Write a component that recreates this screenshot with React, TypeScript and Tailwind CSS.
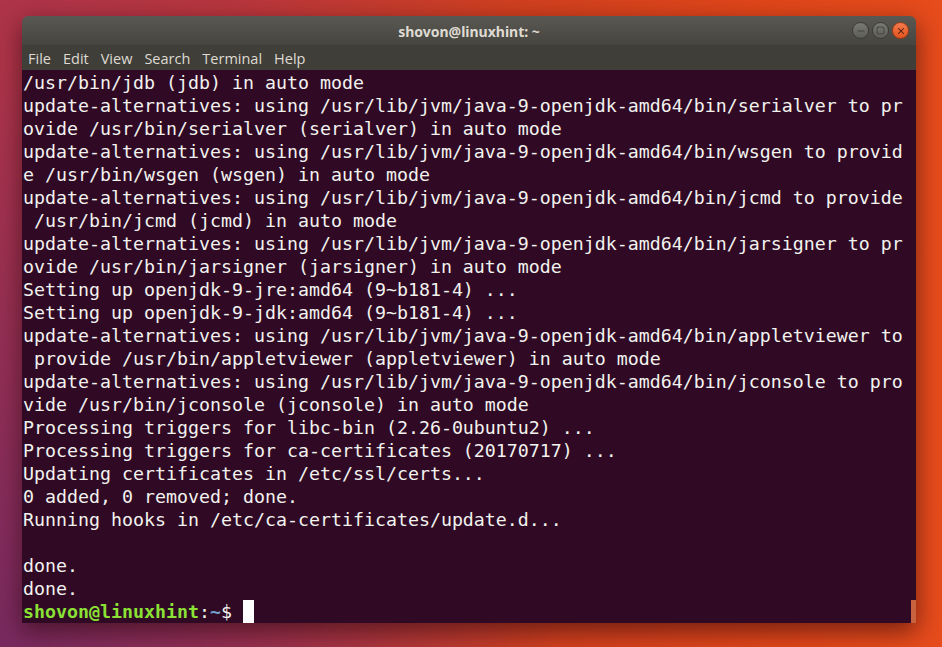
import { X, Minus, Square } from 'lucide-react'

const lines: string[] = [
  '/usr/bin/jdb (jdb) in auto mode',
  'update-alternatives: using /usr/lib/jvm/java-9-openjdk-amd64/bin/serialver to pr',
  'ovide /usr/bin/serialver (serialver) in auto mode',
  'update-alternatives: using /usr/lib/jvm/java-9-openjdk-amd64/bin/wsgen to provid',
  'e /usr/bin/wsgen (wsgen) in auto mode',
  'update-alternatives: using /usr/lib/jvm/java-9-openjdk-amd64/bin/jcmd to provide',
  ' /usr/bin/jcmd (jcmd) in auto mode',
  'update-alternatives: using /usr/lib/jvm/java-9-openjdk-amd64/bin/jarsigner to pr',
  'ovide /usr/bin/jarsigner (jarsigner) in auto mode',
  'Setting up openjdk-9-jre:amd64 (9~b181-4) ...',
  'Setting up openjdk-9-jdk:amd64 (9~b181-4) ...',
  'update-alternatives: using /usr/lib/jvm/java-9-openjdk-amd64/bin/appletviewer to',
  ' provide /usr/bin/appletviewer (appletviewer) in auto mode',
  'update-alternatives: using /usr/lib/jvm/java-9-openjdk-amd64/bin/jconsole to pro',
  'vide /usr/bin/jconsole (jconsole) in auto mode',
  'Processing triggers for libc-bin (2.26-0ubuntu2) ...',
  'Processing triggers for ca-certificates (20170717) ...',
  'Updating certificates in /etc/ssl/certs...',
  '0 added, 0 removed; done.',
  'Running hooks in /etc/ca-certificates/update.d...',
  '',
  'done.',
  'done.',
]

const menus = ['File', 'Edit', 'View', 'Search', 'Terminal', 'Help']

function WindowButtons() {
  return (
    <div className="flex items-center gap-[3px] mr-[7px]">
      <div className="w-[17px] h-[17px] rounded-full bg-[linear-gradient(#7a7a75,#5c5c58)] border border-[#3a3a36] flex items-center justify-center">
        <Minus size={10} strokeWidth={2} className="text-[#3c3b37]" />
      </div>
      <div className="w-[17px] h-[17px] rounded-full bg-[linear-gradient(#7a7a75,#5c5c58)] border border-[#3a3a36] flex items-center justify-center">
        <Square size={9} strokeWidth={2} className="text-[#3c3b37]" />
      </div>
      <div className="w-[17px] h-[17px] rounded-full bg-[linear-gradient(#f37a4c,#e2541f)] border border-[#9c3a15] flex items-center justify-center">
        <X size={10} strokeWidth={2.5} className="text-[#4a1c0c]" />
      </div>
    </div>
  )
}

export default function App() {
  return (
    <div className="w-[942px] h-[647px] overflow-hidden relative bg-[linear-gradient(90deg,#ad344a_0%,#b8363e_25%,#d0401f_55%,#e0461a_80%,#e64c1c_100%)]">
      {/* purple tint on the lower left */}
      <div className="absolute inset-0 bg-[radial-gradient(ellipse_60%_90%_at_0%_100%,rgba(110,40,100,0.85),rgba(110,40,100,0)_100%)]" />

      <div className="relative pt-[16px] pl-[22px]">
        <div className="w-[894px] flex flex-col rounded-t-[6px] shadow-[0_8px_24px_rgba(40,5,10,0.6)]">
          {/* Title bar */}
          <div className="h-[29px] rounded-t-[6px] bg-[linear-gradient(#595852,#46453f)] flex items-center justify-end relative">
            <div className="absolute inset-0 flex items-center justify-center font-['Noto_Sans',sans-serif] text-[14px] font-bold text-[#dfdbd2] pt-[1px]">
              shovon@linuxhint: ~
            </div>
            <div className="relative"><WindowButtons /></div>
          </div>

          {/* Menu bar */}
          <div className="h-[25px] bg-[#3f3e39] flex items-center gap-[12px] pl-[6px] pt-[3px] font-['Open_Sans',sans-serif] text-[14.5px] text-[#dfdbd2]">
            {menus.map((m) => (
              <span key={m}>{m}</span>
            ))}
          </div>

          {/* Terminal */}
          <div className="h-[553px] bg-[#300a24] relative pl-[1px] pt-[1px] font-['DejaVu_Sans_Mono',monospace] text-[18.27px] leading-[23px] text-[#f2f2ef] whitespace-pre">
            {lines.map((l, i) => (
              <div key={i} className="h-[23px]">{l}</div>
            ))}
            <div className="h-[23px] flex">
              <span className="font-bold text-[#8ae234]">shovon@linuxhint</span>
              <span>:</span>
              <span className="font-bold text-[#729fcf]">~</span>
              <span>$ </span>
              <span className="w-[11px] h-[23px] bg-[#ffffff]" />
            </div>
            <div className="absolute right-0 bottom-0 w-[5px] h-[23px] bg-[#c8623f]" />
          </div>
        </div>
      </div>
    </div>
  )
}
